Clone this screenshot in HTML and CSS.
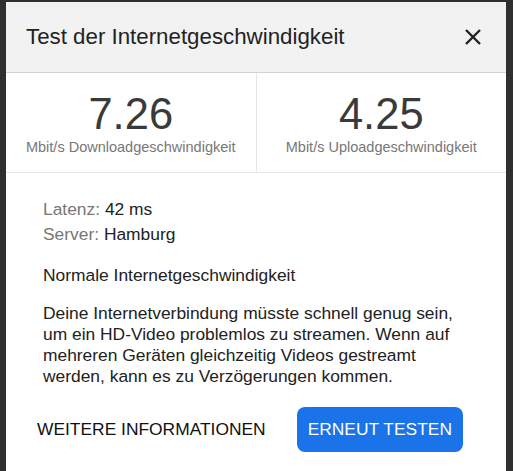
FILE: index.html
```html
<!DOCTYPE html>
<html lang="de">
<head>
    <meta charset="UTF-8">
    <meta name="viewport" content="width=device-width, initial-scale=1.0">
    <title>Test der Internetgeschwindigkeit</title>
    <link rel="stylesheet" href="styles.css">
</head>
<body>

<div class="dialog">
    <div class="dialog-header">
        <h1>Test der Internetgeschwindigkeit</h1>
        <button class="close" aria-label="Schließen">
            <svg width="18" height="18" viewBox="0 0 18 18">
                <path d="M2 2 L16 16 M16 2 L2 16" stroke="#222" stroke-width="2.4" fill="none"/>
            </svg>
        </button>
    </div>

    <div class="stats">
        <div class="stat">
            <div class="stat-value">7.26</div>
            <div class="stat-label">Mbit/s Downloadgeschwindigkeit</div>
        </div>
        <div class="stat">
            <div class="stat-value">4.25</div>
            <div class="stat-label">Mbit/s Uploadgeschwindigkeit</div>
        </div>
    </div>

    <div class="info">
        <div class="meta"><span class="key">Latenz:</span> 42 ms</div>
        <div class="meta"><span class="key">Server:</span> Hamburg</div>

        <p class="rating">Normale Internetgeschwindigkeit</p>

        <p class="desc">Deine Internetverbindung müsste schnell genug sein, um ein HD-Video problemlos zu streamen. Wenn auf mehreren Geräten gleichzeitig Videos gestreamt werden, kann es zu Verzögerungen kommen.</p>

        <div class="actions">
            <button class="btn-text">WEITERE INFORMATIONEN</button>
            <button class="btn-primary">ERNEUT TESTEN</button>
        </div>
    </div>
</div>

</body>
</html>
```

FILE: styles.css
```css
html, body {
    height: 100%;
}
body {
    margin: 0;
    background-color: #2f2f2f;
    font-family: "Liberation Sans", Arial, sans-serif;
    overflow: hidden;
}
.dialog {
    margin: 2px 0 0 6px;
    width: 500px;
    height: 469px;
    background-color: #fff;
}
.dialog-header {
    height: 70px;
    display: flex;
    align-items: center;
    justify-content: space-between;
    padding: 0 24px 0 20px;
    background-color: #f2f2f2;
    border-bottom: 1px solid #d2d2d2;
}
.dialog-header h1 {
    margin: 0;
    font-size: 22.3px;
    font-weight: normal;
    color: #222;
}
.close {
    background: none;
    border: none;
    padding: 0;
    width: 18px;
    height: 18px;
    cursor: pointer;
}
.close svg {
    display: block;
}
.stats {
    display: flex;
    border-bottom: 1px solid #e6e6e6;
}
.stat {
    flex: 1;
    text-align: center;
    padding: 20px 0 16px;
}
.stat + .stat {
    border-left: 1px solid #e6e6e6;
}
.stat-value {
    font-size: 43.5px;
    line-height: 1;
    color: #3a3a3a;
}
.stat-label {
    margin-top: 2px;
    font-size: 14.5px;
    line-height: 17px;
    color: #777;
}
.info {
    padding: 24px 37px 0;
    font-size: 17.4px;
    line-height: 21px;
    color: #222;
}
.meta {
    line-height: 25.5px;
}
.key {
    color: #777;
}
.rating {
    margin: 17.5px 0 0;
}
.desc {
    margin: 17px 0 0;
}
.actions {
    display: flex;
    align-items: center;
    gap: 20px;
    margin: 20px 0 0 -17px;
}
.actions button {
    font-family: inherit;
    font-size: 17.4px;
    height: 45px;
    padding: 0 11px;
    border: none;
    border-radius: 8px;
    cursor: pointer;
}
.btn-text {
    background: none;
    color: #111;
}
.btn-primary {
    background-color: #1a73e8;
    color: #fff;
}
```
